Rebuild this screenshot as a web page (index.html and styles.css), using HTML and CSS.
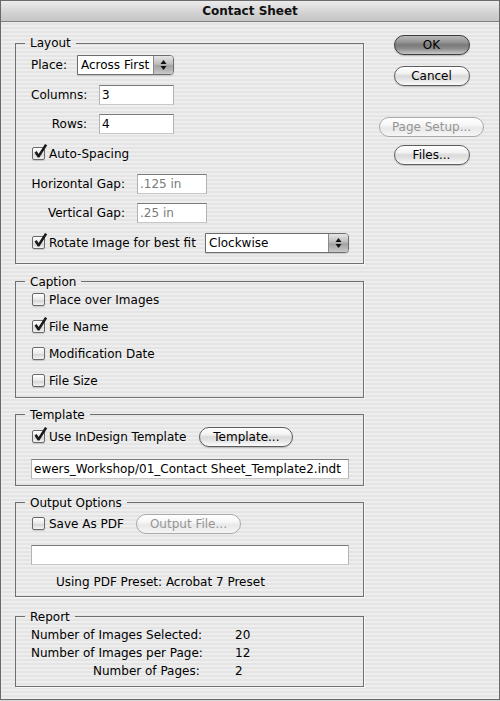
FILE: index.html
```html
<!DOCTYPE html>
<html>
<head>
<meta charset="utf-8">
<title>Contact Sheet</title>
<link rel="stylesheet" href="styles.css">
</head>
<body>
<div class="window">
  <div class="titlebar">Contact Sheet</div>
  <div class="content">
    <div class="groups">
      <fieldset class="group g-layout">
        <legend>Layout</legend>
        <div class="gbody layout-body">
          <div class="row">
            <span class="lbl lbl-place">Place:</span>
            <div class="popup popup-place">
              <span class="popup-text">Across First</span>
              <span class="popup-arrows"><svg width="7" height="12" viewBox="0 0 7 12"><path d="M3.5 1 L6.5 5 L0.5 5 Z M0.5 7 L6.5 7 L3.5 11 Z" fill="#111"/></svg></span>
            </div>
          </div>
          <div class="row">
            <span class="lbl lbl-num">Columns:</span>
            <div class="field field-num">3</div>
          </div>
          <div class="row">
            <span class="lbl lbl-num">Rows:</span>
            <div class="field field-num">4</div>
          </div>
          <div class="row">
            <span class="cb"><svg class="tick" width="16" height="16" viewBox="0 0 16 16"><path d="M1.5 8.5 L3.6 7 L5.6 10 L12 0 L14.2 1.3 L6.4 13.6 L4.7 13.6 Z" fill="#1a1a1a"/></svg></span>
            <span class="cb-text">Auto-Spacing</span>
          </div>
          <div class="row">
            <span class="lbl lbl-gap">Horizontal Gap:</span>
            <div class="field field-gap dim">.125 in</div>
          </div>
          <div class="row">
            <span class="lbl lbl-gap">Vertical Gap:</span>
            <div class="field field-gap dim">.25 in</div>
          </div>
          <div class="row">
            <span class="cb"><svg class="tick" width="16" height="16" viewBox="0 0 16 16"><path d="M1.5 8.5 L3.6 7 L5.6 10 L12 0 L14.2 1.3 L6.4 13.6 L4.7 13.6 Z" fill="#1a1a1a"/></svg></span>
            <span class="cb-text">Rotate Image for best fit</span>
            <div class="popup popup-rotate">
              <span class="popup-text">Clockwise</span>
              <span class="popup-arrows"><svg width="7" height="12" viewBox="0 0 7 12"><path d="M3.5 1 L6.5 5 L0.5 5 Z M0.5 7 L6.5 7 L3.5 11 Z" fill="#111"/></svg></span>
            </div>
          </div>
        </div>
      </fieldset>

      <fieldset class="group g-caption">
        <legend>Caption</legend>
        <div class="gbody caption-body">
          <div class="row"><span class="cb"></span><span class="cb-text">Place over Images</span></div>
          <div class="row">
            <span class="cb"><svg class="tick" width="16" height="16" viewBox="0 0 16 16"><path d="M1.5 8.5 L3.6 7 L5.6 10 L12 0 L14.2 1.3 L6.4 13.6 L4.7 13.6 Z" fill="#1a1a1a"/></svg></span>
            <span class="cb-text">File Name</span>
          </div>
          <div class="row"><span class="cb"></span><span class="cb-text">Modification Date</span></div>
          <div class="row"><span class="cb"></span><span class="cb-text">File Size</span></div>
        </div>
      </fieldset>

      <fieldset class="group g-template">
        <legend>Template</legend>
        <div class="gbody template-body">
          <div class="row">
            <span class="cb"><svg class="tick" width="16" height="16" viewBox="0 0 16 16"><path d="M1.5 8.5 L3.6 7 L5.6 10 L12 0 L14.2 1.3 L6.4 13.6 L4.7 13.6 Z" fill="#1a1a1a"/></svg></span>
            <span class="cb-text">Use InDesign Template</span>
            <button class="btn btn-template">Template...</button>
          </div>
          <div class="field field-wide">ewers_Workshop/01_Contact Sheet_Template2.indt</div>
        </div>
      </fieldset>

      <fieldset class="group g-output">
        <legend>Output Options</legend>
        <div class="gbody output-body">
          <div class="row">
            <span class="cb"></span>
            <span class="cb-text">Save As PDF</span>
            <button class="btn btn-output disabled">Output File...</button>
          </div>
          <div class="field field-wide"></div>
          <div class="preset">Using PDF Preset: Acrobat 7 Preset</div>
        </div>
      </fieldset>

      <fieldset class="group g-report">
        <legend>Report</legend>
        <div class="gbody report-body">
          <span class="r-lbl">Number of Images Selected:</span><span class="r-val">20</span>
          <span class="r-lbl">Number of Images per Page:</span><span class="r-val">12</span>
          <span class="r-lbl r-indent">Number of Pages:</span><span class="r-val">2</span>
        </div>
      </fieldset>
    </div>

    <div class="actions">
      <button class="btn btn-side btn-default">OK</button>
      <button class="btn btn-side btn-cancel">Cancel</button>
      <button class="btn btn-page disabled">Page Setup...</button>
      <button class="btn btn-side btn-files">Files...</button>
    </div>
  </div>
</div>
</body>
</html>
```

FILE: styles.css
```css
* { box-sizing: border-box; }
html, body { margin: 0; padding: 0; }
body {
  width: 500px;
  height: 701px;
  background: #d8d8d8;
  font-family: "DejaVu Sans", "Liberation Sans", sans-serif;
  font-size: 12px;
  color: #000;
}
.window {
  width: 500px;
  height: 700px;
  border: 1px solid #6a6a6a;
  background: repeating-linear-gradient(to bottom, #eeeeee 0, #eeeeee 2px, #e4e4e4 2px, #e4e4e4 4px);
  display: flex;
  flex-direction: column;
}
.titlebar {
  height: 21px;
  flex: none;
  border-bottom: 1px solid #808080;
  background: linear-gradient(#ececec, #d2d2d2 60%, #c6c6c6);
  text-align: center;
  font-weight: bold;
  font-size: 12px;
  line-height: 20px;
  color: #111;
}
.content {
  display: flex;
  padding-left: 14px;
}
.groups {
  width: 349px;
  flex: none;
  display: flex;
  flex-direction: column;
}
.group {
  margin: 9px 0 0 0;
  padding: 0;
  border: 1px solid #707070;
  min-width: 0;
  box-shadow: 1px 1px 0 rgba(255,255,255,0.7);
}
.group legend {
  margin-left: 9px;
  padding: 0 5px;
  line-height: 16px;
  height: 16px;
}
.g-layout { margin-top: 13px; }
.g-caption { margin-top: 10px; }
.g-report { margin-top: 12px; }
.gbody {
  padding: 4px 14px 10px 15px;
}
.row {
  display: flex;
  align-items: center;
  height: 20px;
}
.layout-body {
  display: flex;
  flex-direction: column;
  gap: 9.67px;
}
.caption-body {
  padding-top: 0;
  padding-bottom: 6px;
  display: flex;
  flex-direction: column;
  gap: 7px;
}
.template-body {
  padding-top: 4px;
  padding-bottom: 6px;
  display: flex;
  flex-direction: column;
  gap: 12px;
}
.output-body {
  padding-top: 3px;
  padding-bottom: 6px;
  display: flex;
  flex-direction: column;
  gap: 11px;
}
.preset {
  line-height: 16px;
  margin-top: -2px;
  padding-left: 25px;
}

/* labels */
.lbl-place { width: 46px; }
.lbl-num { width: 68px; text-align: right; padding-right: 12px; }
.lbl-gap { width: 106px; text-align: right; padding-right: 12px; white-space: nowrap; }

/* text fields */
.field {
  height: 20px;
  background: #fff;
  border: 1px solid;
  border-color: #7a7a7a #b3b3b3 #c8c8c8 #b3b3b3;
  padding-left: 2px;
  line-height: 18px;
  white-space: nowrap;
  overflow: hidden;
}
.field-num { width: 75px; }
.field-gap { width: 70px; }
.field-wide { width: 318px; }
.dim { color: #7a7a7a; }

/* popups */
.popup {
  height: 20px;
  display: flex;
  border: 1px solid #6e6e6e;
  border-radius: 0 4px 4px 0;
  background: #fff;
  box-shadow: 0 1px 1px rgba(0,0,0,0.15);
}
.popup-text {
  flex: 1;
  padding-left: 3px;
  line-height: 18px;
  white-space: nowrap;
  overflow: hidden;
}
.popup-arrows {
  width: 20px;
  flex: none;
  border-left: 1px solid #8a8a8a;
  border-radius: 0 3px 3px 0;
  background: linear-gradient(#e6e6e6, #bdbdbd 45%, #a2a2a2 55%, #c9c9c9);
  display: flex;
  align-items: center;
  justify-content: center;
}
.popup-place { width: 97px; }
.popup-rotate { width: 144px; margin-left: auto; }

/* checkboxes */
.cb {
  position: relative;
  width: 13px;
  height: 13px;
  flex: none;
  margin-left: 1px;
  border: 1px solid #6a6a6a;
  border-radius: 2px;
  background: linear-gradient(#ffffff, #e9e9e9 50%, #d2d2d2 51%, #f2f2f2);
  box-shadow: 0 1px 1px rgba(0,0,0,0.15);
}
.cb .tick {
  position: absolute;
  left: 0;
  top: -4px;
}
.cb-text {
  margin-left: 4px;
  white-space: nowrap;
}

/* buttons */
.btn {
  font: inherit;
  color: #000;
  height: 20px;
  padding: 0;
  border: 1px solid #5e5e5e;
  border-radius: 10px;
  background: linear-gradient(#ffffff 0%, #f3f3f3 35%, #dadada 50%, #e4e4e4 70%, #fbfbfb 100%);
  box-shadow: 0 1px 1px rgba(0,0,0,0.2);
  line-height: 18px;
  text-align: center;
  white-space: nowrap;
}
.btn.disabled {
  color: #959595;
  border-color: #a9a9a9;
  background: linear-gradient(#ffffff 0%, #f6f6f6 40%, #e8e8e8 55%, #f6f6f6 100%);
  box-shadow: none;
}
.btn-template { width: 94px; margin-left: 13px; }
.btn-output { width: 105px; margin-left: 12px; }

.actions {
  flex: 1;
  display: flex;
  flex-direction: column;
  align-items: center;
  padding-top: 13px;
}
.btn-side { width: 76px; }
.btn-default {
  border-color: #3c3c3c;
  background: linear-gradient(#b9b9b9 0%, #9a9a9a 30%, #7a7a7a 50%, #8c8c8c 70%, #c9c9c9 100%);
}
.btn-cancel { margin-top: 11px; }
.btn-page { width: 105px; margin-top: 31px; }
.btn-files { margin-top: 8px; }

/* report */
.report-body {
  padding-top: 1px;
  padding-bottom: 6px;
  display: grid;
  grid-template-columns: 204px auto;
  grid-auto-rows: 18px;
  align-items: center;
}
.r-lbl { white-space: nowrap; }
.r-indent { padding-left: 62px; }
```
